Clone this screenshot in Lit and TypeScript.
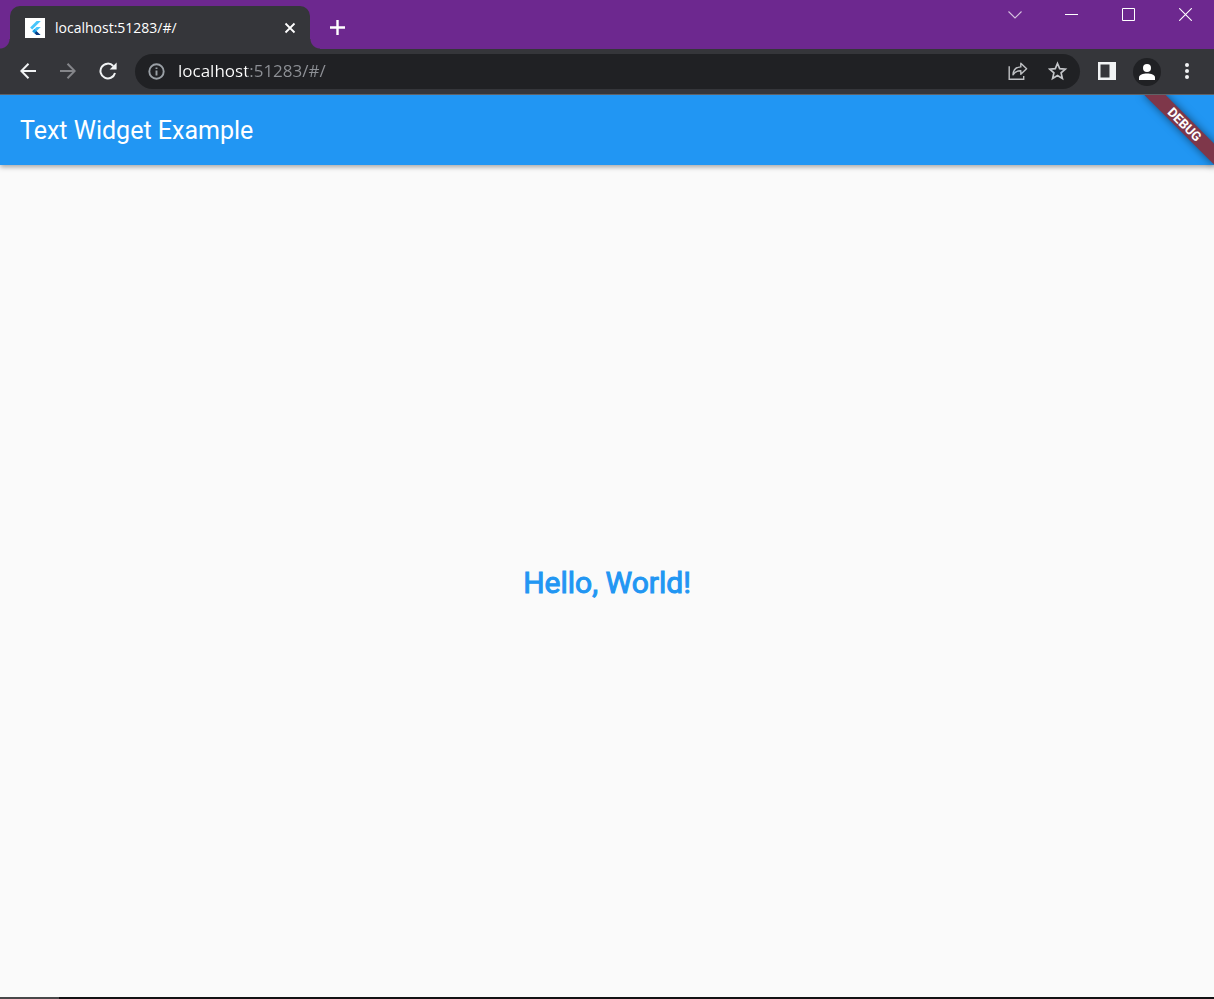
import { LitElement, html, css } from "lit";
import { customElement, state } from "lit/decorators.js";

@customElement("browser-tabs")
class BrowserTabs extends LitElement {
  static styles = css`
    :host { display: flex; height: 49px; padding-left: 10px; background: #6d288f; }
    button { display: grid; place-items: center; border: 0; padding: 0; background: none; color: #fff; }
    svg { display: block; }
    .tab {
      position: relative; display: flex; align-items: center; box-sizing: border-box;
      width: 300px; height: 43px; margin-top: 6px; padding: 0 10px 0 15px;
      border-radius: 10px 10px 0 0; background: #35363a; color: #fff;
    }
    .tab::before, .tab::after { content: ""; position: absolute; bottom: 0; width: 10px; height: 10px; }
    .tab::before { right: 100%; background: radial-gradient(circle at 0 0, transparent 9px, #35363a 10px); }
    .tab::after { left: 100%; background: radial-gradient(circle at 100% 0, transparent 9px, #35363a 10px); }
    .favicon { flex: none; background: #fff; }
    .name { flex: 1; margin-left: 10px; font: 14px/20px "Open Sans", sans-serif; white-space: nowrap; }
    .close { width: 20px; height: 20px; }
    .add { width: 35px; height: 35px; margin: 10px 0 0 10px; }
    .window { display: flex; margin-left: auto; }
    .window button { width: 57px; height: 29px; }
  `;

  render() {
    return html`
      <div class="tab">
        <svg class="favicon" width="20" height="20" viewBox="0 0 20 20" aria-hidden="true">
          <path d="M11.6 3H15.8L7.2 11.6L5.1 9.5Z" fill="#47c5fb" />
          <path d="M11.6 9H15.8L11.4 13.2L15.5 17H11.5L7.3 13.2Z" fill="#47c5fb" />
          <path d="M9.3 15.1L11.4 13.1L15.5 17H11.4Z" fill="#0b3a83" />
          <path d="M7.3 13.2L9.4 11.1L11.5 13.2L9.4 15.3Z" fill="#1d9be0" />
        </svg>
        <span class="name">localhost:51283/#/</span>
        <button class="close" aria-label="Close tab">
          <svg width="12" height="12" viewBox="0 0 12 12" stroke="#fff" stroke-width="1.8"><path d="M1.5 1.5L10.5 10.5M10.5 1.5L1.5 10.5" /></svg>
        </button>
      </div>
      <button class="add" aria-label="New tab">
        <svg width="15" height="15" viewBox="0 0 15 15" stroke="#fff" stroke-width="2.4"><path d="M7.5 0V15M0 7.5H15" /></svg>
      </button>
      <div class="window">
        <button aria-label="Search tabs">
          <svg width="14" height="8" viewBox="0 0 14 8" fill="none" stroke="#d6c2df" stroke-width="1.1"><path d="M.5 .5L7 7L13.5 .5" /></svg>
        </button>
        <button aria-label="Minimize">
          <svg width="13" height="13" viewBox="0 0 13 13" stroke="#fff"><path d="M0 6.5H13" /></svg>
        </button>
        <button aria-label="Maximize">
          <svg width="13" height="13" viewBox="0 0 13 13" fill="none" stroke="#fff"><path d="M.5 .5H12.5V12.5H.5Z" /></svg>
        </button>
        <button aria-label="Close window">
          <svg width="13" height="13" viewBox="0 0 13 13" stroke="#fff" stroke-width="1.1"><path d="M.2 .2L12.8 12.8M12.8 .2L.2 12.8" /></svg>
        </button>
      </div>
    `;
  }
}

@customElement("browser-toolbar")
class BrowserToolbar extends LitElement {
  @state() private address = "localhost:51283/#/";

  static styles = css`
    :host {
      display: flex; align-items: center; box-sizing: border-box; height: 46px;
      padding: 0 7px 0 8px; border-bottom: 1px solid #5f6165; background: #35363a;
    }
    button {
      display: grid; place-items: center; box-sizing: border-box; width: 40px; height: 36px;
      border: 0; padding: 0 0 1px; background: none;
    }
    svg { display: block; }
    .omnibox {
      display: flex; flex: 1; align-items: center; height: 35px; margin: 0 7px;
      border-radius: 18px; background: #202124;
    }
    .omnibox button:first-child { width: 43px; }
    .omnibox button:last-child { margin-right: 2px; }
    .address {
      flex: 1; min-width: 0; height: 26px; border: 0; padding: 0 0 2px; outline: 0;
      font: 17px/24px "Open Sans", sans-serif;
      background: linear-gradient(90deg, #fff 69px, #8e9196 69px);
      -webkit-background-clip: text; background-clip: text;
      -webkit-text-fill-color: transparent; color: #fff;
    }
    .avatar { width: 28px; height: 28px; margin: 0 6px; border-radius: 50%; padding: 0; background: #202124; }
  `;

  render() {
    return html`
      <button aria-label="Back">
        <svg width="16" height="16" viewBox="0 0 16 16" fill="none" stroke="#f1f3f4" stroke-width="2"><path d="M16 8H1.5M8.5 .8L1.3 8L8.5 15.2" /></svg>
      </button>
      <button aria-label="Forward">
        <svg width="16" height="16" viewBox="0 0 16 16" fill="none" stroke="#85868a" stroke-width="2"><path d="M0 8H14.5M7.5 .8L14.7 8L7.5 15.2" /></svg>
      </button>
      <button aria-label="Reload">
        <svg width="18" height="18" viewBox="0 0 18 18" fill="none" stroke="#f1f3f4" stroke-width="2"><path d="M16 11A7.4 7.4 0 1 1 14.3 4" /><path d="M17.6 .6V7.6H10.6Z" fill="#f1f3f4" stroke="none" /></svg>
      </button>
      <div class="omnibox">
        <button aria-label="View site information">
          <svg width="17" height="17" viewBox="0 0 17 17" fill="none" stroke="#9aa0a6" stroke-width="1.9"><circle cx="8.5" cy="8.5" r="7.2" /><path d="M8.5 7.6V12.6M8.5 4.4V6.1" /></svg>
        </button>
        <input
          class="address" aria-label="Address" spellcheck="false" .value=${this.address}
          @input=${(e: Event) => (this.address = (e.target as HTMLInputElement).value)} />
        <button aria-label="Share">
          <svg width="20" height="18" viewBox="0 0 20 18" fill="none" stroke="#bfc1c4" stroke-width="1.4"><path d="M1.2 4.2V17.2H15.7V14" /><path d="M5 12.8C5.3 8 8 5.1 12.8 4.9V1.2L18.6 6.8L12.8 12.2V8.7C9.3 8.6 6.8 9.8 5 12.8Z" stroke-linejoin="round" /></svg>
        </button>
        <button aria-label="Bookmark this page">
          <svg width="20" height="20" viewBox="0 0 20 20" fill="none" stroke="#c4c6c9" stroke-width="1.7"><path d="M9.5 2.5L11.7 7.7L17.3 8.2L13.1 11.9L14.4 17.4L9.5 14.5L4.6 17.4L5.9 11.9L1.7 8.2L7.3 7.7Z" /></svg>
        </button>
      </div>
      <button aria-label="Side panel">
        <svg width="18" height="18" viewBox="0 0 18 18" fill="#f1f3f4"><path fill-rule="evenodd" d="M0 0H18V18H0ZM2.5 2.5V15.5H11.5V2.5Z" /></svg>
      </button>
      <button class="avatar" aria-label="Profile">
        <svg width="16" height="16" viewBox="0 0 16 16" fill="#fff"><circle cx="8" cy="4" r="4" /><path d="M0 16V13.5C0 10.8 4 9.5 8 9.5S16 10.8 16 13.5V16Z" /></svg>
      </button>
      <button aria-label="Menu">
        <svg width="4" height="16" viewBox="0 0 4 16" fill="#f1f3f4"><circle cx="2" cy="2" r="2" /><circle cx="2" cy="8" r="2" /><circle cx="2" cy="14" r="2" /></svg>
      </button>
    `;
  }
}

@customElement("app-root")
class AppRoot extends LitElement {
  static styles = css`
    :host { display: flex; flex-direction: column; min-height: 100vh; background: #fafafa; font-family: Roboto, sans-serif; }
    .page { position: relative; display: flex; flex: 1; flex-direction: column; overflow: hidden; }
    .appbar {
      display: flex; align-items: center; box-sizing: border-box; height: 70px; padding: 2px 20px 0;
      background: #2196f3; box-shadow: 0 2px 5px rgba(0, 0, 0, 0.35);
    }
    h1 { margin: 0; color: #fff; font-size: 25px; line-height: 30px; font-weight: 400; }
    main { display: grid; flex: 1; place-items: center; padding-top: 4px; }
    .hello {
      margin: 0; color: #2196f3; font-size: 30px; line-height: 36px; font-weight: 400;
      -webkit-text-stroke: 1px #2196f3;
    }
    .debug {
      position: absolute; top: 22px; right: -21px; width: 101px; height: 15px;
      transform: rotate(45deg); background: #7e374a; color: #fff; text-align: center;
      font-size: 13px; line-height: 15px; font-weight: 700; box-shadow: 0 0 8px rgba(0, 0, 0, 0.5);
    }
    .taskbar { height: 2px; background: linear-gradient(90deg, #48484a 59px, #121214 59px); }
  `;

  render() {
    return html`
      <browser-tabs></browser-tabs>
      <browser-toolbar></browser-toolbar>
      <div class="page">
        <header class="appbar"><h1>Text Widget Example</h1></header>
        <main><p class="hello">Hello, World!</p></main>
        <div class="debug">DEBUG</div>
      </div>
      <div class="taskbar"></div>
    `;
  }
}
